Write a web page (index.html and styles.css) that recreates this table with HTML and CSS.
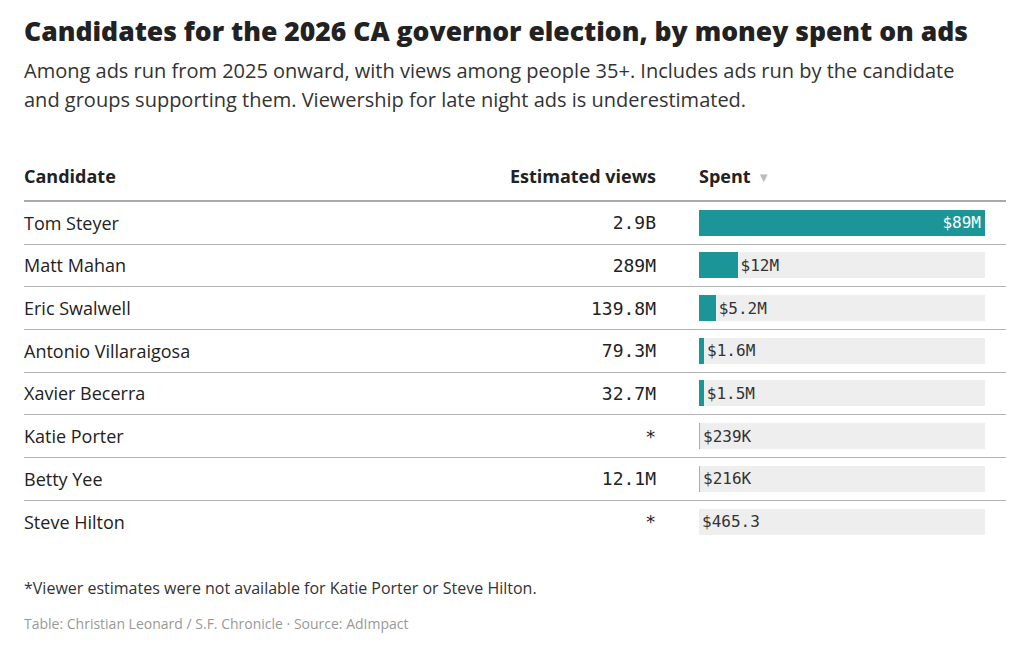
FILE: index.html
```html
<!DOCTYPE html>
<html>
<head>
<meta charset="utf-8">
<link rel="stylesheet" href="styles.css">
</head>
<body>
<div class="chart">
  <h1 class="title">Candidates for the 2026 CA governor election, by money spent on ads</h1>
  <p class="subtitle">Among ads run from 2025 onward, with views among people 35+. Includes ads run by the candidate and groups supporting them. Viewership for late night ads is underestimated.</p>
  <div class="table">
    <div class="row head">
      <div class="c-name">Candidate</div>
      <div class="c-views">Estimated views</div>
      <div class="c-spent">Spent <span class="sort">&#9660;</span></div>
    </div>
    <div class="row">
      <div class="c-name">Tom Steyer</div>
      <div class="c-views">2.9B</div>
      <div class="c-spent"><div class="track"><div class="bar full" style="width:100%"><span class="val in">$89M</span></div></div></div>
    </div>
    <div class="row">
      <div class="c-name">Matt Mahan</div>
      <div class="c-views">289M</div>
      <div class="c-spent"><div class="track"><div class="bar" style="width:38.6px"></div><span class="val">$12M</span></div></div>
    </div>
    <div class="row">
      <div class="c-name">Eric Swalwell</div>
      <div class="c-views">139.8M</div>
      <div class="c-spent"><div class="track"><div class="bar" style="width:16.7px"></div><span class="val">$5.2M</span></div></div>
    </div>
    <div class="row">
      <div class="c-name">Antonio Villaraigosa</div>
      <div class="c-views">79.3M</div>
      <div class="c-spent"><div class="track"><div class="bar" style="width:5.1px"></div><span class="val">$1.6M</span></div></div>
    </div>
    <div class="row">
      <div class="c-name">Xavier Becerra</div>
      <div class="c-views">32.7M</div>
      <div class="c-spent"><div class="track"><div class="bar" style="width:4.8px"></div><span class="val">$1.5M</span></div></div>
    </div>
    <div class="row">
      <div class="c-name">Katie Porter</div>
      <div class="c-views">*</div>
      <div class="c-spent"><div class="track"><div class="bar thin" style="width:1px"></div><span class="val">$239K</span></div></div>
    </div>
    <div class="row">
      <div class="c-name">Betty Yee</div>
      <div class="c-views">12.1M</div>
      <div class="c-spent"><div class="track"><div class="bar thin" style="width:1px"></div><span class="val">$216K</span></div></div>
    </div>
    <div class="row last">
      <div class="c-name">Steve Hilton</div>
      <div class="c-views">*</div>
      <div class="c-spent"><div class="track"><div class="bar" style="width:0px"></div><span class="val">$465.3</span></div></div>
    </div>
  </div>
  <p class="note">*Viewer estimates were not available for Katie Porter or Steve Hilton.</p>
  <p class="source">Table: Christian Leonard / S.F. Chronicle · Source: AdImpact</p>
</div>
</body>
</html>
```
FILE: styles.css
```css
* { box-sizing: border-box; }
html, body { margin: 0; padding: 0; background: #fff; }
body {
  font-family: "Open Sans", "Noto Sans", sans-serif;
  color: #222;
}
.chart {
  padding: 14px 18px 0 24px;
}
.title {
  margin: 0;
  font-size: 26.5px;
  line-height: 34px;
  font-weight: 800;
  color: #222;
  letter-spacing: 0;
}
.subtitle {
  margin: 8px 0 0;
  font-size: 20px;
  line-height: 29px;
  color: #333;
  max-width: 950px;
}
.table {
  margin-top: 43px;
}
.row {
  display: grid;
  grid-template-columns: 1fr 160px 286px;
  column-gap: 43px;
  padding-right: 21px;
  align-items: center;
  height: 42.67px;
  border-bottom: 1px solid #b3b3b3;
  font-size: 18px;
}
.row.last { border-bottom: none; }
.row.head {
  height: 45px;
  border-bottom: 2px solid #aaa;
  font-weight: 700;
  font-size: 18px;
  align-items: start;
  padding-top: 7px;
}
.c-views { text-align: right; font-family: "DejaVu Sans Mono", monospace; font-size: 18px; color: #222; }
.head .c-views { font-family: "Open Sans", "Noto Sans", sans-serif; font-size: 18px; }
.sort { color: #bbb; font-size: 13px; margin-left: 2px; position: relative; top: -1px; }
.track {
  position: relative;
  display: flex;
  align-items: center;
  height: 26px;
  background: #eee;
}
.bar {
  height: 100%;
  background: #1b9598;
  flex: none;
}
.bar.thin { background: #7cc2c4; }
.bar.full {
  display: flex;
  align-items: center;
  justify-content: flex-end;
  padding-right: 4px;
}
.val {
  font-family: "DejaVu Sans Mono", monospace;
  font-size: 16px;
  color: #333;
  margin-left: 3px;
}
.val.in { color: #fff; margin-left: 0; }
.note {
  margin: 34px 0 0;
  font-size: 16px;
  color: #333;
}
.source {
  margin: 15px 0 0;
  font-size: 14px;
  color: #999;
}
```
